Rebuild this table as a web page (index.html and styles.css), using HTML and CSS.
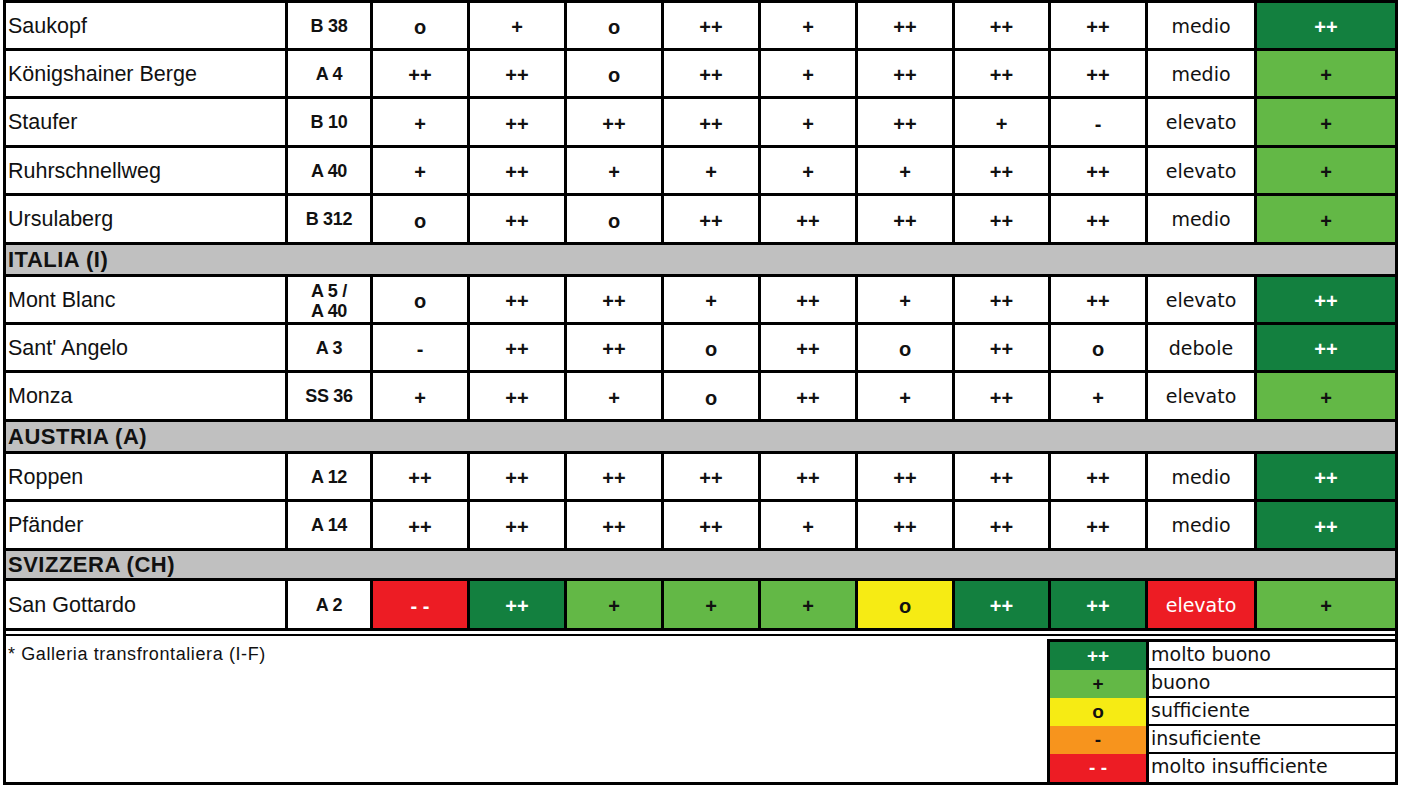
FILE: index.html
```html
<!DOCTYPE html>
<html lang="it">
<head>
<meta charset="utf-8">
<title>Gallerie</title>
<link rel="stylesheet" href="styles.css">
</head>
<body>
<div class="sheet">
<table class="grid">
<colgroup>
<col class="c-name"><col class="c-road">
<col class="c-r"><col class="c-r"><col class="c-r"><col class="c-r"><col class="c-r"><col class="c-r"><col class="c-r8"><col class="c-r">
<col class="c-lvl"><col class="c-tot">
</colgroup>
<tbody>
<tr class="h48"><td class="name">Saukopf</td><td class="road">B 38</td><td>o</td><td>+</td><td>o</td><td>++</td><td>+</td><td>++</td><td>++</td><td>++</td><td class="lvl">medio</td><td class="dg">++</td></tr>
<tr class="h48"><td class="name">Königshainer Berge</td><td class="road">A 4</td><td>++</td><td>++</td><td>o</td><td>++</td><td>+</td><td>++</td><td>++</td><td>++</td><td class="lvl">medio</td><td class="lg">+</td></tr>
<tr class="h49"><td class="name">Staufer</td><td class="road">B 10</td><td>+</td><td>++</td><td>++</td><td>++</td><td>+</td><td>++</td><td>+</td><td>-</td><td class="lvl">elevato</td><td class="lg">+</td></tr>
<tr class="h48"><td class="name">Ruhrschnellweg</td><td class="road">A 40</td><td>+</td><td>++</td><td>+</td><td>+</td><td>+</td><td>+</td><td>++</td><td>++</td><td class="lvl">elevato</td><td class="lg">+</td></tr>
<tr class="h49"><td class="name">Ursulaberg</td><td class="road">B 312</td><td>o</td><td>++</td><td>o</td><td>++</td><td>++</td><td>++</td><td>++</td><td>++</td><td class="lvl">medio</td><td class="lg">+</td></tr>
<tr class="sec h32"><td colspan="12">ITALIA (I)</td></tr>
<tr class="h48"><td class="name">Mont Blanc</td><td class="road two">A 5 /<br>A 40</td><td>o</td><td>++</td><td>++</td><td>+</td><td>++</td><td>+</td><td>++</td><td>++</td><td class="lvl">elevato</td><td class="dg">++</td></tr>
<tr class="h48"><td class="name">Sant' Angelo</td><td class="road">A 3</td><td>-</td><td>++</td><td>++</td><td>o</td><td>++</td><td>o</td><td>++</td><td>o</td><td class="lvl">debole</td><td class="dg">++</td></tr>
<tr class="h49"><td class="name">Monza</td><td class="road">SS 36</td><td>+</td><td>++</td><td>+</td><td>o</td><td>++</td><td>+</td><td>++</td><td>+</td><td class="lvl">elevato</td><td class="lg">+</td></tr>
<tr class="sec h32"><td colspan="12">AUSTRIA (A)</td></tr>
<tr class="h48"><td class="name">Roppen</td><td class="road">A 12</td><td>++</td><td>++</td><td>++</td><td>++</td><td>++</td><td>++</td><td>++</td><td>++</td><td class="lvl">medio</td><td class="dg">++</td></tr>
<tr class="h49"><td class="name">Pfänder</td><td class="road">A 14</td><td>++</td><td>++</td><td>++</td><td>++</td><td>+</td><td>++</td><td>++</td><td>++</td><td class="lvl">medio</td><td class="dg">++</td></tr>
<tr class="sec h30"><td colspan="12">SVIZZERA (CH)</td></tr>
<tr class="h50"><td class="name">San Gottardo</td><td class="road">A 2</td><td class="rd">- -</td><td class="dg">++</td><td class="lg">+</td><td class="lg">+</td><td class="lg">+</td><td class="ye">o</td><td class="dg">++</td><td class="dg">++</td><td class="lvl rd">elevato</td><td class="lg">+</td></tr>
</tbody>
</table>
<div class="foot">
<p class="note">* Galleria transfrontaliera (I-F)</p>
<div class="legend">
<div class="sym dg">++</div><div class="txt">molto buono</div>
<div class="sym lg">+</div><div class="txt">buono</div>
<div class="sym ye">o</div><div class="txt">sufficiente</div>
<div class="sym or">-</div><div class="txt">insuficiente</div>
<div class="sym rd">- -</div><div class="txt last">molto insufficiente</div>
</div>
</div>
</div>
</body>
</html>
```
FILE: styles.css
```css
html, body {
  margin: 0;
  padding: 0;
  background: #fff;
}
body {
  font-family: "Liberation Sans", Arial, sans-serif;
  color: #111;
}
.sheet {
  margin-left: 3px;
  width: 1395px;
}
.grid {
  border-collapse: collapse;
  table-layout: fixed;
  width: 1395px;
}
.c-name { width: 282px; }
.c-road { width: 85px; }
.c-r { width: 97px; }
.c-r8 { width: 96px; }
.c-lvl { width: 109px; }
.c-tot { width: 141px; }

.grid td {
  border: 3px solid #000;
  padding: 3px 0 0;
  text-align: center;
  vertical-align: middle;
  font-weight: bold;
  font-size: 20px;
  line-height: 22px;
}
.grid td.name {
  text-align: left;
  font-weight: normal;
  font-size: 21.5px;
  padding: 0 0 0 2px;
  white-space: nowrap;
}
.grid td.road {
  font-size: 18px;
  padding: 0;
  letter-spacing: -0.3px;
}
.grid td.road.two {
  line-height: 20px;
  padding-top: 2px;
}
.grid td.lvl {
  font-family: "DejaVu Sans", Verdana, sans-serif;
  font-weight: normal;
  font-size: 19px;
  padding: 0;
}
.grid tr.sec td {
  background: #c0c0c0;
  text-align: left;
  font-size: 22px;
  letter-spacing: 0.5px;
  padding: 0 0 0 2px;
}
.h48 { height: 48px; }
.h49 { height: 49px; }
.h50 { height: 50px; }
.h32 { height: 32px; }
.h30 { height: 30px; }

.dg { background: #13803f; color: #fff; }
.lg { background: #63b846; color: #111; }
.ye { background: #f6eb14; color: #111; }
.or { background: #f7941d; color: #111; }
.rd { background: #ed1c24; color: #fff; }

.foot {
  display: flex;
  justify-content: space-between;
  align-items: flex-end;
  height: 151px;
  border: 3px solid #000;
  border-top: none;
  box-shadow: inset 0 3px 0 #fff, inset 0 5px 0 #000;
}
.note {
  align-self: flex-start;
  margin: 13px 0 0 2px;
  font-size: 18px;
  line-height: 20px;
  letter-spacing: 0.6px;
}
.legend {
  display: grid;
  grid-template-columns: 99px 1fr;
  width: 345px;
  border-left: 3px solid #000;
  border-top: 3px solid #000;
}
.legend .sym {
  height: 28px;
  border-right: 3px solid #000;
  box-sizing: border-box;
  text-align: center;
  font-weight: bold;
  font-size: 19px;
  line-height: 28px;
}
.legend .txt {
  height: 28px;
  box-sizing: border-box;
  border-bottom: 2px solid #000;
  padding-left: 2px;
  font-family: "DejaVu Sans", Verdana, sans-serif;
  font-size: 19px;
  line-height: 25px;
  white-space: nowrap;
}
.legend .txt.last {
  border-bottom: none;
}
```
